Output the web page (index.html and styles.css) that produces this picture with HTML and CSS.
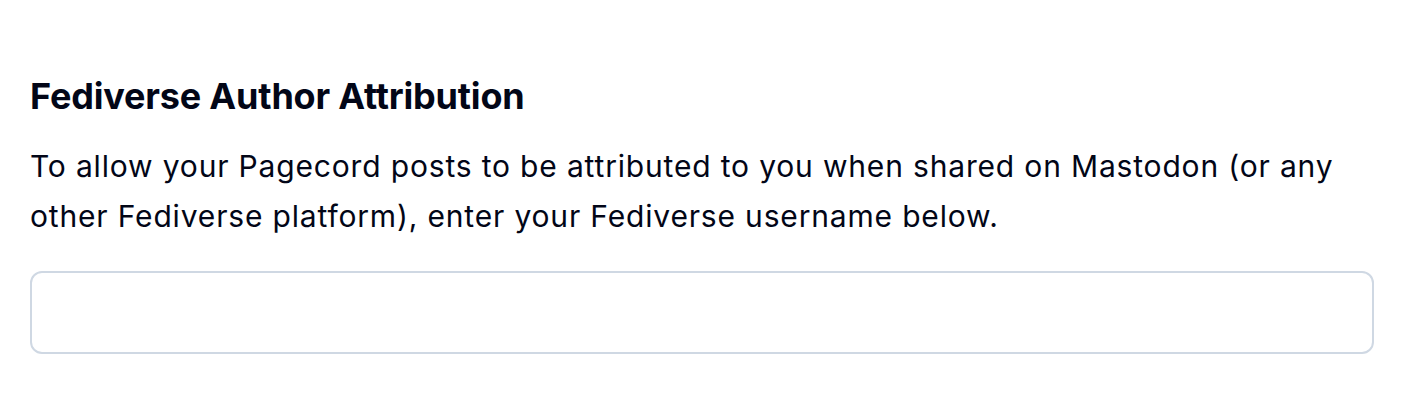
FILE: index.html
```html
<!DOCTYPE html>
<html>
<head>
<meta charset="utf-8">
<link rel="stylesheet" href="styles.css">
</head>
<body>
<section class="section">
  <h2 class="title">Fediverse Author Attribution</h2>
  <p class="desc">To allow your Pagecord posts to be attributed to you when shared on Mastodon (or any other Fediverse platform), enter your Fediverse username below.</p>
  <input class="field" type="text">
</section>
</body>
</html>
```
FILE: styles.css
```css
html, body {
  margin: 0;
  padding: 0;
  background: #ffffff;
}
body {
  font-family: Inter, "Noto Sans", sans-serif;
  color: #020617;
}
.section {
  padding: 76px 34px 0 30px;
  display: flex;
  flex-direction: column;
}
.title {
  margin: 0;
  font-size: 36px;
  font-weight: 700;
  line-height: 40px;
  letter-spacing: -0.18px;
}
.desc {
  margin: 25px 0 0 0;
  font-size: 30px;
  line-height: 50px;
  letter-spacing: 0.83px;
}
.field {
  margin-top: 30px;
  height: 83px;
  box-sizing: border-box;
  border: 2px solid #cfd8e3;
  border-radius: 12px;
  background: #fff;
}
```
